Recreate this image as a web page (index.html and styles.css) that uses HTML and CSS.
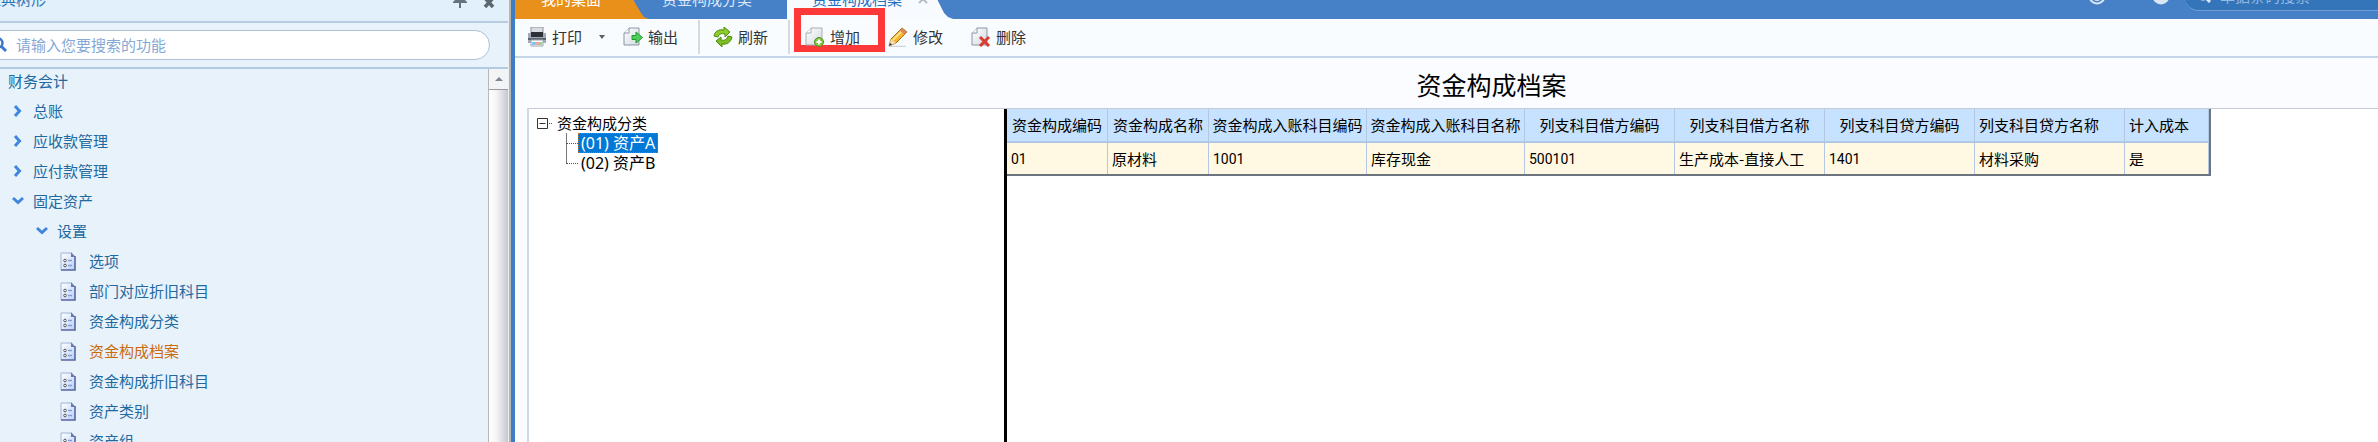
FILE: index.html
```html
<!DOCTYPE html>
<html lang="zh-CN">
<head>
    <meta charset="UTF-8">
    <meta name="viewport" content="width=device-width, initial-scale=1.0">
    <title>资金构成档案</title>
    <link rel="stylesheet" href="styles.css">
</head>
<body>
    <svg class="defs" aria-hidden="true">
        <defs>
            <linearGradient id="paper" x1="0" y1="0" x2="1" y2="1">
                <stop offset="0" stop-color="#ffffff"/>
                <stop offset="1" stop-color="#b9d0fb"/>
            </linearGradient>
            <linearGradient id="sheet" x1="0" y1="0" x2="1" y2="1">
                <stop offset="0" stop-color="#ffffff"/>
                <stop offset="1" stop-color="#d3d9de"/>
            </linearGradient>
            <symbol id="icon-doc" viewBox="0 0 16 19">
                <path d="M1 1h10l4 4v13H1z" fill="url(#paper)"/>
                <path d="M1 18V1h10" fill="none" stroke="#9db4d8"/>
                <path d="M15 4v14H1" fill="none" stroke="#5a64a0" stroke-width="1.6"/>
                <path d="M11 0l4.500 5H11z" fill="#6a78b4"/>
                <circle cx="5" cy="8.500" r="1.300" fill="#fff" stroke="#555"/>
                <circle cx="5" cy="13.500" r="1.300" fill="#fff" stroke="#555"/>
                <path d="M8 8.500h4M8 13.500h4" stroke="#7f9fd8" stroke-width="1.300"/>
            </symbol>
        </defs>
    </svg>

    <div class="app">
        <aside class="sidebar">
            <div class="sidebar-header">
                <span class="sidebar-title">经典树形</span>
                <button class="icon-button" aria-label="固定">
                    <svg width="14" height="18" viewBox="0 0 14 18"><path d="M4 0h6v7l4 4v1H8v5H6v-5H0v-1l4-4z" fill="#66727e"/></svg>
                </button>
                <button class="icon-button" aria-label="关闭">
                    <svg width="12" height="18" viewBox="0 0 12 18"><path d="M2 7l8 9M10 7l-8 9" stroke="#5d6770" stroke-width="3.500"/></svg>
                </button>
            </div>
            <div class="sidebar-search">
                <label class="search-box">
                    <svg width="14" height="16" viewBox="0 0 14 16"><circle cx="5" cy="6" r="4.500" fill="none" stroke="#3a78c8" stroke-width="2.500"/><path d="M8 9l5 5" stroke="#3a78c8" stroke-width="3"/></svg>
                    <input type="text" aria-label="搜索功能" placeholder="请输入您要搜索的功能">
                </label>
            </div>
            <div class="sidebar-body">
                <ul class="menu" id="menu">
                    <li class="root"><a href="#">财务会计</a></li>
                    <li class="group"><svg class="arrow" viewBox="0 0 12 12"><path d="M3 1l4.500 5L3 11" /></svg><a href="#">总账</a></li>
                    <li class="group"><svg class="arrow" viewBox="0 0 12 12"><path d="M3 1l4.500 5L3 11" /></svg><a href="#">应收款管理</a></li>
                    <li class="group"><svg class="arrow" viewBox="0 0 12 12"><path d="M3 1l4.500 5L3 11" /></svg><a href="#">应付款管理</a></li>
                    <li class="group"><svg class="arrow" viewBox="0 0 12 12"><path d="M1 3l5 4.500L11 3" /></svg><a href="#">固定资产</a></li>
                    <li class="subgroup"><svg class="arrow" viewBox="0 0 12 12"><path d="M1 3l5 4.500L11 3" /></svg><a href="#">设置</a></li>
                    <li class="leaf"><svg class="doc"><use href="#icon-doc"/></svg><a href="#">选项</a></li>
                    <li class="leaf"><svg class="doc"><use href="#icon-doc"/></svg><a href="#">部门对应折旧科目</a></li>
                    <li class="leaf"><svg class="doc"><use href="#icon-doc"/></svg><a href="#">资金构成分类</a></li>
                    <li class="leaf active"><svg class="doc"><use href="#icon-doc"/></svg><a href="#">资金构成档案</a></li>
                    <li class="leaf"><svg class="doc"><use href="#icon-doc"/></svg><a href="#">资金构成折旧科目</a></li>
                    <li class="leaf"><svg class="doc"><use href="#icon-doc"/></svg><a href="#">资产类别</a></li>
                    <li class="leaf"><svg class="doc"><use href="#icon-doc"/></svg><a href="#">资产组</a></li>
                </ul>
                <div class="scrollbar">
                    <div class="scroll-up"><svg width="8" height="4" viewBox="0 0 8 4"><path d="M4 0l4 4H0z" fill="#7d8794"/></svg></div>
                    <div class="scroll-thumb"></div>
                </div>
            </div>
        </aside>

        <main class="main">
            <header class="topbar">
                <nav class="tabs">
                    <a class="tab tab-home" href="#">我的桌面</a>
                    <a class="tab" href="#">资金构成分类</a>
                    <a class="tab tab-active" href="#">资金构成档案
                        <svg class="tab-close" width="10" height="10" viewBox="0 0 10 10"><path d="M1 1l8 8M9 1l-8 8" stroke="#b4bcc8" stroke-width="2"/></svg>
                    </a>
                </nav>
                <div class="top-tools">
                    <svg width="18" height="18" viewBox="0 0 18 18"><circle cx="9" cy="9" r="7.500" fill="none" stroke="#dbe6f5" stroke-width="2"/><path d="M5 9a4 4 0 0 0 8 0" fill="none" stroke="#dbe6f5" stroke-width="2"/></svg>
                    <svg width="18" height="18" viewBox="0 0 18 18"><circle cx="9" cy="9" r="8.500" fill="#dbe6f5"/><path d="M9 4v9" stroke="#4681c8" stroke-width="3"/></svg>
                    <label class="top-search">
                        <svg width="14" height="14" viewBox="0 0 14 14"><circle cx="6" cy="6" r="4.500" fill="none" stroke="#dbe6f5" stroke-width="2"/><path d="M9 9l4 4" stroke="#dbe6f5" stroke-width="3"/></svg>
                        <input type="text" aria-label="条码搜索" placeholder="单据条码搜索">
                    </label>
                </div>
            </header>

            <div class="toolbar">
                <button class="tool">
                    <svg width="20" height="20" viewBox="0 0 20 20">
                        <path d="M4 0h12v8H4z" fill="#d9dde3" stroke="#8d939c"/>
                        <path d="M1 6h18v10H1z" fill="#a3a9b6"/>
                        <path d="M4 5h12v5H4z" fill="#2d3036"/>
                        <path d="M1 11h18v2H1z" fill="#5c6270"/>
                        <path d="M4 13h12v6H4z" fill="#fff" stroke="#9aa3b2"/>
                        <path d="M5 15h3v3H5z" fill="#7cc8ee"/><path d="M8 15h4v3H8z" fill="#f2a3a0"/><path d="M12 15h3v3h-3z" fill="#8fd98a"/>
                    </svg>
                    打印
                </button>
                <button class="tool-caret" aria-label="打印选项"><svg width="6" height="4" viewBox="0 0 6 4"><path d="M0 0h6L3 4z" fill="#5c6066"/></svg></button>
                <button class="tool">
                    <svg width="20" height="20" viewBox="0 0 20 20">
                        <path d="M6 1h10v17H1V6z" fill="url(#sheet)" stroke="#8a96a6"/>
                        <path d="M6 1v5H1" fill="#fff" stroke="#8a96a6"/>
                        <path d="M9 8.500h4V5l6.500 5.500L13 16v-3.500H9z" fill="#4fcf5a" stroke="#1f9a35"/>
                    </svg>
                    输出
                </button>
                <span class="tool-separator"></span>
                <button class="tool">
                    <svg width="20" height="20" viewBox="0 0 20 20">
                        <path d="M1 9C2 4 6 2 11 3V0l6 5-5 5V7C8 6 6 7 5 10z" fill="#8ecb2c" stroke="#4f8a10"/>
                        <path d="M19 10c-1 5-5 8-10 7v3l-6-6 5-4v3c4 1 6-1 7-4z" fill="#7bbd22" stroke="#4f8a10"/>
                    </svg>
                    刷新
                </button>
                <span class="tool-separator"></span>
                <button class="tool tool-marked">
                    <svg width="20" height="20" viewBox="0 0 20 20">
                        <path d="M6 1h11v17H1V6z" fill="url(#sheet)" stroke="#a5adb6"/>
                        <path d="M6 1v5H1" fill="#fff" stroke="#a5adb6"/>
                        <circle cx="14" cy="15" r="4.500" fill="#86c440" stroke="#4d9420"/>
                        <path d="M14 12.500v5M11.500 15h5" stroke="#fff" stroke-width="2"/>
                    </svg>
                    增加
                </button>
                <button class="tool">
                    <svg width="20" height="20" viewBox="0 0 20 20">
                        <path d="M2 19.500h16" stroke="#d0d4d8" stroke-width="1.500"/>
                        <path d="M1 19l2-7L14 1l5 4L8 16z" fill="#f7b52c" stroke="#a0701c"/>
                        <path d="M5 13L15 3" stroke="#fde08a" stroke-width="2"/>
                        <path d="M14 1l5 4-2.500 2.500-5-4z" fill="#d98a5a"/>
                        <path d="M1 19l2-7 5 4z" fill="#f5dcb4"/><path d="M1 19l1-3 2 1.500z" fill="#333"/>
                    </svg>
                    修改
                </button>
                <button class="tool tool-delete">
                    <svg width="20" height="20" viewBox="0 0 20 20">
                        <path d="M6 1h10v17H1V6z" fill="url(#sheet)" stroke="#8a96a6"/>
                        <path d="M6 1v5H1" fill="#fff" stroke="#8a96a6"/>
                        <path d="M9 10l9 9M18 10l-9 9" stroke="#dc3b30" stroke-width="3"/>
                    </svg>
                    删除
                </button>
            </div>

            <h1 class="page-title">资金构成档案</h1>

            <div class="content">
                <div class="class-tree">
                    <div class="tree-root">
                        <svg width="15" height="11" viewBox="0 0 15 11"><path d="M.5.5h10v10H.5zM2.500 5.500h6" fill="none" stroke="#333"/><path d="M12 5.500h3" stroke="#555" stroke-dasharray="1 1"/></svg>
                        <span>资金构成分类</span>
                    </div>
                    <ul class="tree-children">
                        <li><span class="tree-item selected">(01) 资产A</span></li>
                        <li><span class="tree-item">(02) 资产B</span></li>
                    </ul>
                </div>
                <div class="grid-panel">
                    <table class="grid">
                        <colgroup>
                            <col class="w-short"><col class="w-short">
                            <col class="w-long"><col class="w-long">
                            <col class="w-mid"><col class="w-mid"><col class="w-mid"><col class="w-mid">
                            <col class="w-flag">
                        </colgroup>
                        <thead>
                            <tr>
                                <th>资金构成编码</th>
                                <th>资金构成名称</th>
                                <th>资金构成入账科目编码</th>
                                <th>资金构成入账科目名称</th>
                                <th>列支科目借方编码</th>
                                <th>列支科目借方名称</th>
                                <th>列支科目贷方编码</th>
                                <th class="left">列支科目贷方名称</th>
                                <th class="left">计入成本</th>
                            </tr>
                        </thead>
                        <tbody>
                            <tr>
                                <td class="code">01</td>
                                <td>原材料</td>
                                <td class="code">1001</td>
                                <td>库存现金</td>
                                <td class="code">500101</td>
                                <td>生产成本-直接人工</td>
                                <td class="code">1401</td>
                                <td>材料采购</td>
                                <td>是</td>
                            </tr>
                        </tbody>
                    </table>
                </div>
            </div>
        </main>
    </div>
</body>
</html>
```
FILE: styles.css
```css
* {
    box-sizing: border-box;
}
body {
    margin: 0;
    font-family: "Noto Sans CJK SC", sans-serif;
    font-size: 15px;
    line-height: 20px;
    color: #000;
    overflow: hidden;
}
button, input {
    font: inherit;
    border: none;
    background: none;
    padding: 0;
}
a {
    color: inherit;
    text-decoration: none;
}
ul {
    list-style: none;
    margin: 0;
    padding: 0;
}
svg {
    flex: none;
}
.defs {
    position: absolute;
    width: 0;
    height: 0;
}
.app {
    display: flex;
    height: 100vh;
}

/* sidebar */
.sidebar {
    display: flex;
    flex-direction: column;
    flex: none;
    width: 515px;
    background: #e7f2fb;
    border-right: 4px solid #3f7cc6;
    box-shadow: inset -2px 0 #b5b5b0;
    padding-right: 3px;
}
.sidebar-header {
    display: flex;
    align-items: flex-end;
    gap: 16px;
    height: 23px;
    padding: 0 13px 12px 0;
    background: #e1f0fa;
    border-bottom: 2px solid #b9cde2;
}
.sidebar-title {
    flex: 1;
    margin-left: -14px;
    color: #2a76bd;
}
.icon-button {
    display: flex;
}
.sidebar-search {
    padding: 7px 18px 7px 0;
    border-bottom: 2px solid #b3cbe2;
}
.search-box {
    display: flex;
    align-items: center;
    gap: 9px;
    height: 30px;
    margin-left: -16px;
    padding-left: 8px;
    background: #fff;
    border: 1px solid #aebfd6;
    border-radius: 15px;
}
.search-box input {
    flex: 1;
    outline: none;
}
.search-box input::placeholder {
    color: #85a9d6;
}
.sidebar-body {
    display: flex;
    flex: 1;
    min-height: 0;
}
.menu {
    flex: 1;
    overflow: hidden;
    color: #21699f;
}
.menu li {
    display: flex;
    align-items: center;
    height: 30px;
}
.menu .root {
    height: 27px;
    padding: 0 0 4px 8px;
}
.menu .group {
    gap: 9px;
    padding-left: 12px;
}
.menu .subgroup {
    gap: 9px;
    padding-left: 36px;
}
.menu .leaf {
    gap: 13px;
    padding-left: 60px;
}
.menu .active {
    color: #cb6a0c;
}
.arrow {
    width: 12px;
    height: 12px;
    fill: none;
    stroke: #3f86dc;
    stroke-width: 3;
}
.doc {
    width: 16px;
    height: 19px;
}
.scrollbar {
    display: flex;
    flex-direction: column;
    width: 20px;
    border-left: 1px solid #b8b8b8;
    background: #f3f4f6;
}
.scroll-up {
    display: flex;
    align-items: center;
    justify-content: center;
    height: 20px;
}
.scroll-thumb {
    flex: 1;
    border-top: 1px solid #9a9a9e;
    background: linear-gradient(to right, #fff, #f4f4f6 40%, #c6c6ce);
}

/* main area */
.main {
    display: flex;
    flex-direction: column;
    flex: 1;
    min-width: 0;
    background: #fafcff;
}
.topbar {
    display: flex;
    justify-content: space-between;
    align-items: flex-end;
    height: 19px;
    background: #4681c8;
}
.tabs {
    display: flex;
}
.tab {
    display: flex;
    align-items: center;
    height: 38px;
    padding: 0 35px 2px 13px;
    color: #dce8f7;
}
.tab-home {
    padding: 0 48px 2px 26px;
    background: #e8901a;
    color: #fff;
    clip-path: polygon(0 0, 112px 0, 119px 20px, 126px 32px, 129px 36px, 134px 100%, 0 100%);
}
.tab-active {
    gap: 16px;
    padding: 0 30px 2px 25px;
    background: #f7fbff;
    color: #1e6fc0;
    clip-path: polygon(0 0, 143px 0, 151px 20px, 157px 32px, 161px 36px, 166px 100%, 0 100%);
}
.top-tools {
    display: flex;
    align-items: flex-end;
    padding-bottom: 8px;
}
.top-tools > svg {
    margin: 0 46px 6px 0;
}
.top-tools > svg + svg {
    margin-right: 15px;
}
.top-search {
    display: flex;
    align-items: center;
    gap: 9px;
    width: 193px;
    height: 27px;
    padding: 0 0 3px 12px;
    background: #3474b9;
    border-bottom: 1px solid #6f9fd6;
    border-radius: 14px 0 0 14px;
}
.top-search input {
    width: 150px;
    outline: none;
}
.top-search input::placeholder {
    color: #94b9e2;
}

/* toolbar */
.toolbar {
    display: flex;
    align-items: center;
    height: 39px;
    padding: 0 0 2px 12px;
    background: #f8fcff;
    border-bottom: 2px solid #c3d5e6;
}
.tool {
    display: flex;
    align-items: center;
    gap: 5px;
    height: 36px;
    color: #333;
    cursor: pointer;
}
.tool-caret {
    display: flex;
    width: 41px;
    padding-left: 17px;
}
.tool-separator {
    width: 2px;
    height: 34px;
    margin: 0 13px 0 20px;
    background: #d5dade;
}
/* frame reaches up over the tab strip */
.tool-marked {
    z-index: 1;
    height: 44px;
    margin: 0 3px 13px -9px;
    padding: 13px 18px 0 4px;
    border: 7px solid #fc3838;
}
.tool-delete {
    margin-left: 28px;
}
.page-title {
    margin: 0;
    padding: 12px 0 9px 90px;
    font-size: 25px;
    font-weight: 400;
    line-height: 29px;
    text-align: center;
}
.content {
    display: flex;
    flex: 1;
    min-height: 0;
    margin-left: 12px;
    background: #fff;
    border-top: 1px solid #c5ccd6;
    border-left: 2px solid #d2d8e0;
}
.class-tree {
    flex: none;
    width: 478px;
    padding: 4px 0 0 8px;
    border-right: 3px solid #000;
}
.tree-root {
    display: flex;
    align-items: center;
    gap: 5px;
}
.tree-children {
    margin-left: 29px;
}
.tree-children li {
    display: flex;
    align-items: center;
    height: 20px;
    background: linear-gradient(#777, #777) no-repeat 0 0 / 1px 100%;
}
.tree-children li:last-child {
    background-size: 1px 50%;
}
.tree-children li::before {
    content: "";
    width: 12px;
    border-top: 1px dotted #555;
}
.tree-item {
    padding: 0 3px;
    font-family: "Noto Sans", "Noto Sans CJK SC", sans-serif;
    font-size: 16px;
}
.tree-item.selected {
    background: #0078d7;
    color: #fff;
    outline: 1px dotted #c46a1a;
    outline-offset: -1px;
}
.grid-panel {
    flex: 1;
    min-width: 0;
}
.grid {
    width: 1204px;
    table-layout: fixed;
    border-collapse: separate;
    border-spacing: 0;
    border-right: 2px solid #6c7480;
    border-bottom: 2px solid #6c7480;
}
.w-short { width: 101px; }
.w-long { width: 158px; }
.w-mid { width: 150px; }
.w-flag { width: 84px; }
.grid th,
.grid td {
    padding: 0 0 0 4px;
    border-right: 1px solid #b3c6e4;
    font-weight: 400;
    text-align: left;
    white-space: nowrap;
}
.grid th {
    height: 34px;
    padding: 0;
    background: #c6e2ff;
    border-bottom: 2px solid #b0c8e4;
    text-align: center;
}
.grid th.left {
    padding-left: 4px;
    text-align: left;
}
.grid td {
    height: 31px;
    background: #fff9e3;
}
.grid .code {
    font-family: Roboto, sans-serif;
    font-size: 14px;
}
```
